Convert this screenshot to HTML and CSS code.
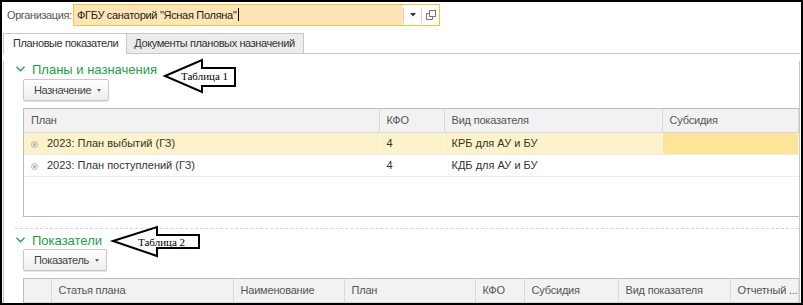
FILE: index.html
```html
<!DOCTYPE html>
<html lang="ru">
<head>
  <meta charset="UTF-8" />
  <title>Плановые показатели</title>
  <link rel="stylesheet" href="styles.css">
</head>
<body>
  <div class="window">
    <div class="org-row">
      <span class="org-label">Организация:</span>
      <div class="org-field">
        <span class="org-value">ФГБУ санаторий "Ясная Поляна"<span class="caret"></span></span>
        <span class="field-sep"></span>
        <span class="field-btn">
          <svg width="6" height="4" viewBox="0 0 6 4"><path d="M0 0h6L3 3.5z" fill="#333"/></svg>
        </span>
        <span class="field-sep"></span>
        <span class="field-btn">
          <svg width="10" height="10" viewBox="0 0 10 10" fill="none" stroke="#777" stroke-width="1">
            <rect x="3.5" y="0.5" width="6" height="6"/>
            <path d="M3.5 3.5h-3v6h6v-3"/>
          </svg>
        </span>
      </div>
    </div>

    <div class="tabs">
      <div class="tab active">Плановые показатели</div>
      <div class="tab">Документы плановых назначений</div>
    </div>

    <div class="panel">
      <div class="group-title">
        <svg width="9" height="6" viewBox="0 0 9 6"><path d="M0.5 0.8l4 4 4-4" fill="none" stroke="#22a046" stroke-width="1.3"/></svg>
        Планы и назначения
      </div>
      <button class="cmd">Назначение <span class="tri"></span></button>

      <div class="grid-box plans">
        <table class="grid">
          <colgroup><col style="width:355px"><col style="width:65px"><col style="width:218px"><col></colgroup>
          <thead>
            <tr><th>План</th><th>КФО</th><th>Вид показателя</th><th>Субсидия</th></tr>
          </thead>
          <tbody>
            <tr class="selected">
              <td><span class="row-icon"></span>2023: План выбытий (ГЗ)</td>
              <td>4</td>
              <td>КРБ для АУ и БУ</td>
              <td class="current"></td>
            </tr>
            <tr>
              <td><span class="row-icon"></span>2023: План поступлений (ГЗ)</td>
              <td>4</td>
              <td>КДБ для АУ и БУ</td>
              <td></td>
            </tr>
          </tbody>
        </table>
      </div>

      <div class="section-sep"></div>

      <div class="group-title second">
        <svg width="9" height="6" viewBox="0 0 9 6"><path d="M0.5 0.8l4 4 4-4" fill="none" stroke="#22a046" stroke-width="1.3"/></svg>
        Показатели
      </div>
      <button class="cmd second">Показатель <span class="tri"></span></button>

      <div class="grid-box indicators">
        <table class="grid">
          <colgroup>
            <col style="width:27px"><col style="width:182px"><col style="width:111px"><col style="width:131px">
            <col style="width:49px"><col style="width:94px"><col style="width:112px"><col>
          </colgroup>
          <thead>
            <tr><th></th><th>Статья плана</th><th>Наименование</th><th>План</th><th>КФО</th><th>Субсидия</th><th>Вид показателя</th><th>Отчетный ...</th></tr>
          </thead>
        </table>
      </div>
    </div>

    <svg class="callouts" width="803" height="305" viewBox="0 0 803 305">
      <polygon points="165,76 202,60 202,68 235,68 235,86 202,86 202,92" fill="#fff" stroke="#000" stroke-width="2" stroke-linejoin="miter"/>
      <text x="181" y="80">Таблица 1</text>
      <polygon points="113,241 157,227 157,235 199,235 199,248 157,248 157,256" fill="#fff" stroke="#000" stroke-width="2" stroke-linejoin="miter"/>
      <text x="138" y="246">Таблица 2</text>
    </svg>
  </div>
</body>
</html>
```

FILE: styles.css
```css
* {
  box-sizing: border-box;
}
body {
  margin: 0;
  background: #fff;
  font-family: "Liberation Sans", Arial, sans-serif;
  font-size: 11px;
  color: #333;
}
.window {
  position: relative;
  width: 803px;
  height: 305px;
  border: 2px solid #000;
  overflow: hidden;
  background: #fff;
}

/* organisation field */
.org-row {
  display: flex;
  align-items: center;
  height: 22px;
  margin-top: 2px;
  padding-left: 5px;
}
.org-label {
  width: 66px;
  color: #555;
  letter-spacing: -0.4px;
}
.org-field {
  display: flex;
  align-items: center;
  width: 367px;
  height: 22px;
  border: 1px solid #f2c53d;
}
.org-value {
  flex: 1;
  height: 20px;
  padding-left: 3px;
  line-height: 20px;
  background: #fde5b5;
  color: #222;
  letter-spacing: -0.3px;
}
.caret {
  display: inline-block;
  width: 1px;
  height: 13px;
  margin-left: 1px;
  background: #000;
  vertical-align: -2px;
}
.field-sep {
  width: 1px;
  height: 15px;
  background: #d3d3d3;
}
.field-btn {
  display: flex;
  align-items: center;
  justify-content: center;
  width: 17px;
  height: 20px;
}

/* tabs */
.tabs {
  display: flex;
  height: 21px;
  margin: 7px 1px 0;
  border-bottom: 1px solid #c8c8c8;
}
.tab {
  height: 20px;
  padding: 0 8px 0 7px;
  line-height: 19px;
  border: 1px solid #c8c8c8;
  border-bottom: none;
  background: #ececec;
  color: #333;
  letter-spacing: -0.4px;
}
.tab + .tab {
  margin-left: -1px;
}
.tab.active {
  height: 21px;
  padding: 0 8px 0 9px;
  background: #fff;
}

/* panel */
.panel {
  height: 260px;
  margin: 0 1px;
  border-left: 1px solid #c8c8c8;
  border-right: 1px solid #c8c8c8;
}
.group-title {
  display: flex;
  align-items: center;
  gap: 7px;
  height: 16px;
  margin: 7px 0 0 12px;
  font-size: 13px;
  color: #22a046;
}
.group-title.second {
  margin-top: 3px;
}
.cmd {
  display: flex;
  align-items: center;
  gap: 6px;
  height: 22px;
  margin: 2px 0 0 19px;
  padding: 0 7px 0 10px;
  border: 1px solid #c9c9c9;
  border-radius: 2px;
  background: linear-gradient(#fff, #ededed);
  box-shadow: 0 1px 1px rgba(0, 0, 0, 0.12);
  font: inherit;
  color: #444;
  letter-spacing: -0.4px;
}
.cmd.second {
  margin-top: 1px;
}
.tri {
  width: 0;
  height: 0;
  border-left: 2.5px solid transparent;
  border-right: 2.5px solid transparent;
  border-top: 3px solid #666;
}

/* grids */
.grid-box {
  margin: 7px 0 0 19px;
  border: 1px solid #bdbdbd;
  border-right: none;
}
.grid-box.plans {
  height: 109px;
}
.grid {
  width: 775px;
  table-layout: fixed;
  border-collapse: collapse;
}
.grid th {
  height: 23px;
  padding: 0 7px;
  border-right: 1px solid #d9d9d9;
  border-bottom: 1px solid #d9d9d9;
  background: #f2f2f2;
  font-weight: normal;
  text-align: left;
  color: #555;
  white-space: nowrap;
  overflow: hidden;
  letter-spacing: -0.2px;
}
.grid td {
  height: 22px;
  padding: 0 7px;
  border-bottom: 1px solid #ececec;
  border-right: 1px solid transparent;
  color: #333;
  white-space: nowrap;
}
.grid tr.selected td {
  background: #fdf2c9;
  border-right-color: #fef8e4;
}
.grid tr.selected td.current {
  background: #fde597;
}
.row-icon {
  display: inline-block;
  width: 7px;
  height: 7px;
  margin-right: 9px;
  border: 1px solid #b5b5b5;
  border-radius: 50%;
  background: radial-gradient(circle, #b5b5b5 0 1.3px, transparent 1.6px);
  vertical-align: -1px;
}
.section-sep {
  margin: 11px 0 0 11px;
  border-top: 1px dashed #d5d5d5;
}

/* annotation arrows */
.callouts {
  position: absolute;
  top: -2px;
  left: -2px;
  pointer-events: none;
}
.callouts text {
  font-family: "Liberation Serif", "Times New Roman", serif;
  font-size: 11px;
  fill: #000;
}
```
